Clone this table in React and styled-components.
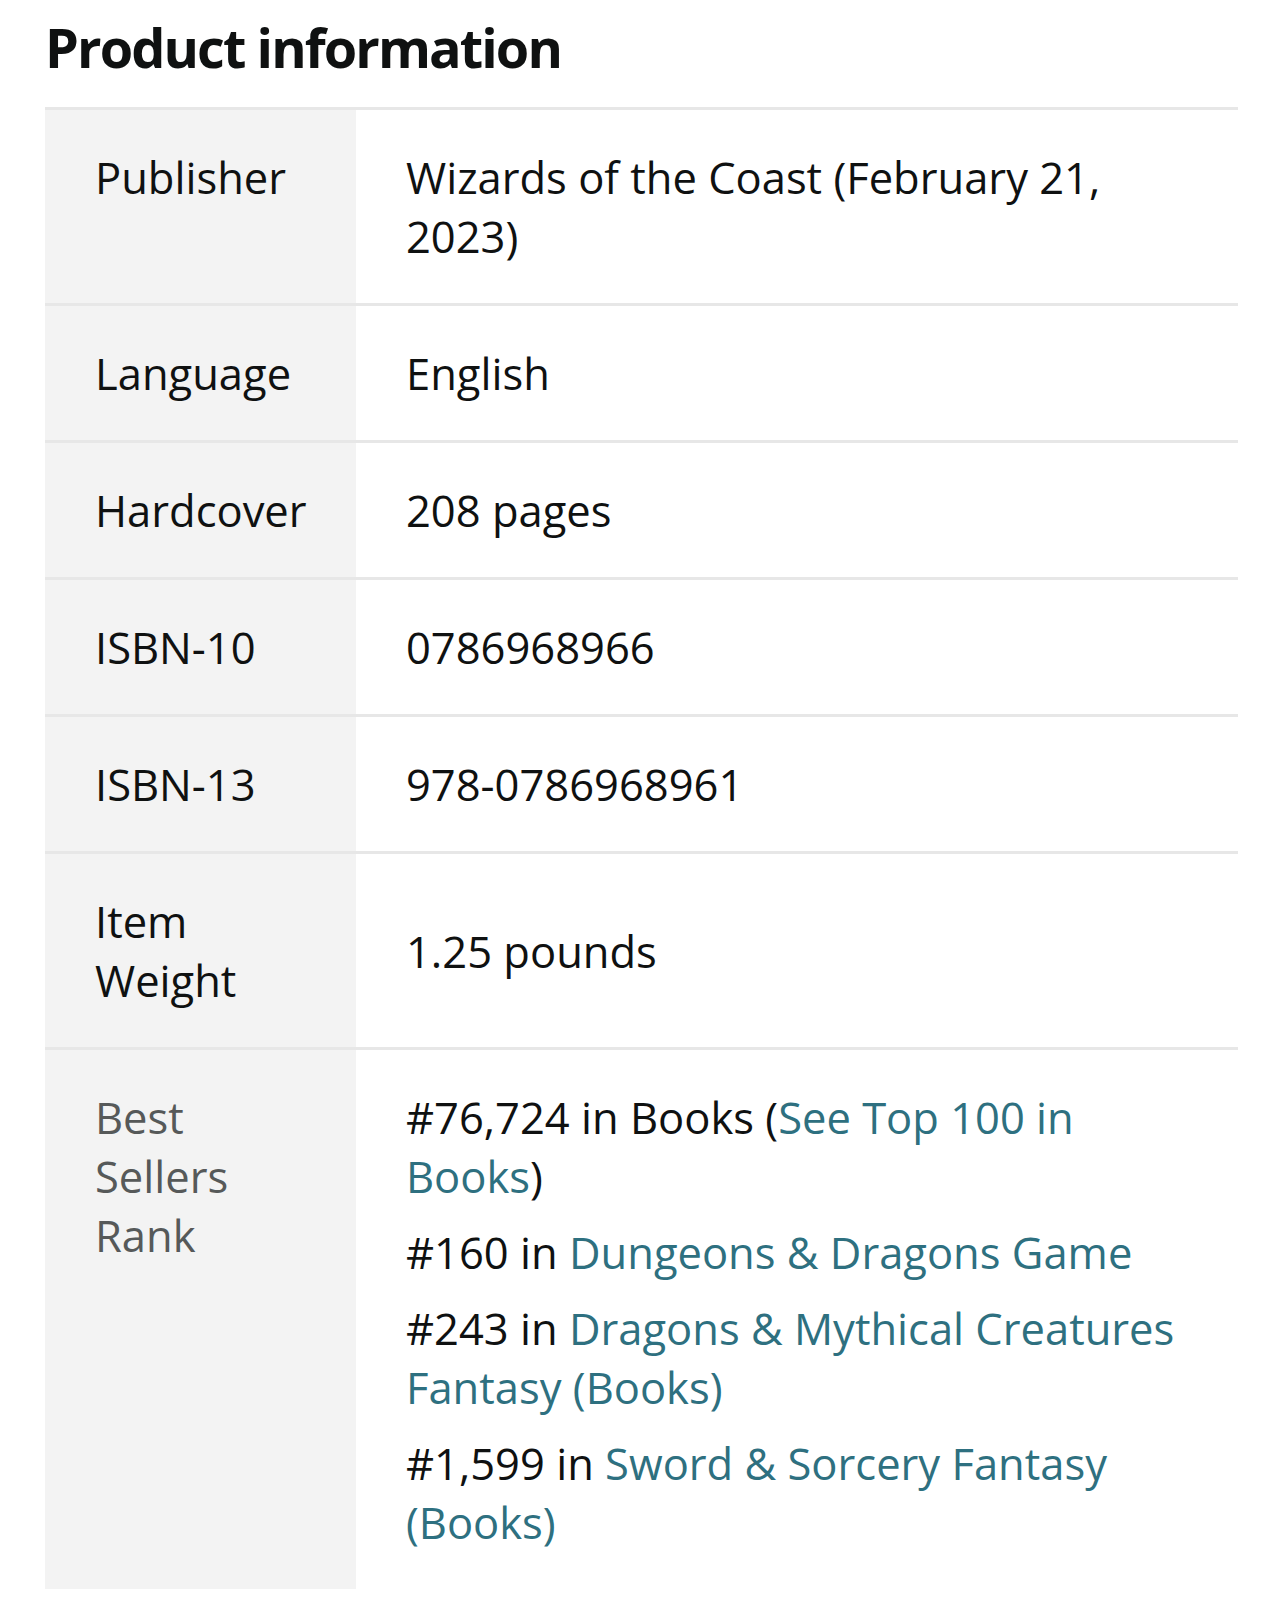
import React from 'react';
import styled, { createGlobalStyle } from 'styled-components';

const GlobalStyle = createGlobalStyle`
  body {
    margin: 0;
    background: #ffffff;
    font-family: "Open Sans", "Noto Sans", sans-serif;
    color: #0f1111;
  }
`;

const Page = styled.div`
  padding: 0 46px 0 45px;
`;

const Heading = styled.h2`
  margin: 0;
  padding: 15px 0 27px 0;
  font-size: 54px;
  line-height: 65px;
  font-weight: 700;
  letter-spacing: -1.9px;
  color: #0f1111;
`;

const Table = styled.div`
  display: flex;
  flex-direction: column;
`;

const Row = styled.div`
  display: grid;
  grid-template-columns: 311px 1fr;
  border-top: 3px solid #e7e7e7;
`;

const Label = styled.div`
  background: #f3f3f3;
  padding: 38px 40px 37px 50px;
  font-size: 43.5px;
  line-height: 59px;
  color: ${(p) => (p.muted ? '#565959' : '#0f1111')};
`;

const Value = styled.div`
  padding: 38px 52px 37px 50px;
  font-size: 43.5px;
  line-height: 59px;
  color: #0f1111;
  display: flex;
  align-items: center;
`;

const RankList = styled.ul`
  margin: 0;
  padding: 0;
  list-style: none;
`;

const RankItem = styled.li`
  margin-bottom: 17px;
  &:last-child {
    margin-bottom: 0;
  }
`;

const Link = styled.a`
  color: #2e7080;
  text-decoration: none;
`;

const details = [
  { label: 'Publisher', value: 'Wizards of the Coast (February 21, 2023)' },
  { label: 'Language', value: 'English' },
  { label: 'Hardcover', value: '208 pages' },
  { label: 'ISBN-10', value: '0786968966' },
  { label: 'ISBN-13', value: '978-0786968961' },
  { label: 'Item Weight', value: '1.25 pounds' },
];

const ranks = [
  { pre: '#160 in ', link: 'Dungeons & Dragons Game' },
  { pre: '#243 in ', link: 'Dragons & Mythical Creatures Fantasy (Books)' },
  { pre: '#1,599 in ', link: 'Sword & Sorcery Fantasy (Books)' },
];

const App = () => {
  return (
    <Page>
      <GlobalStyle />
      <Heading>Product information</Heading>
      <Table>
        {details.map((d) => (
          <Row key={d.label}>
            <Label>{d.label}</Label>
            <Value>{d.value}</Value>
          </Row>
        ))}
        <Row>
          <Label muted>Best Sellers Rank</Label>
          <Value>
            <RankList>
              <RankItem>
                #76,724 in Books (<Link href="#">See Top 100 in Books</Link>)
              </RankItem>
              {ranks.map((r) => (
                <RankItem key={r.link}>
                  {r.pre}
                  <Link href="#">{r.link}</Link>
                </RankItem>
              ))}
            </RankList>
          </Value>
        </Row>
      </Table>
    </Page>
  );
};

export default App;
